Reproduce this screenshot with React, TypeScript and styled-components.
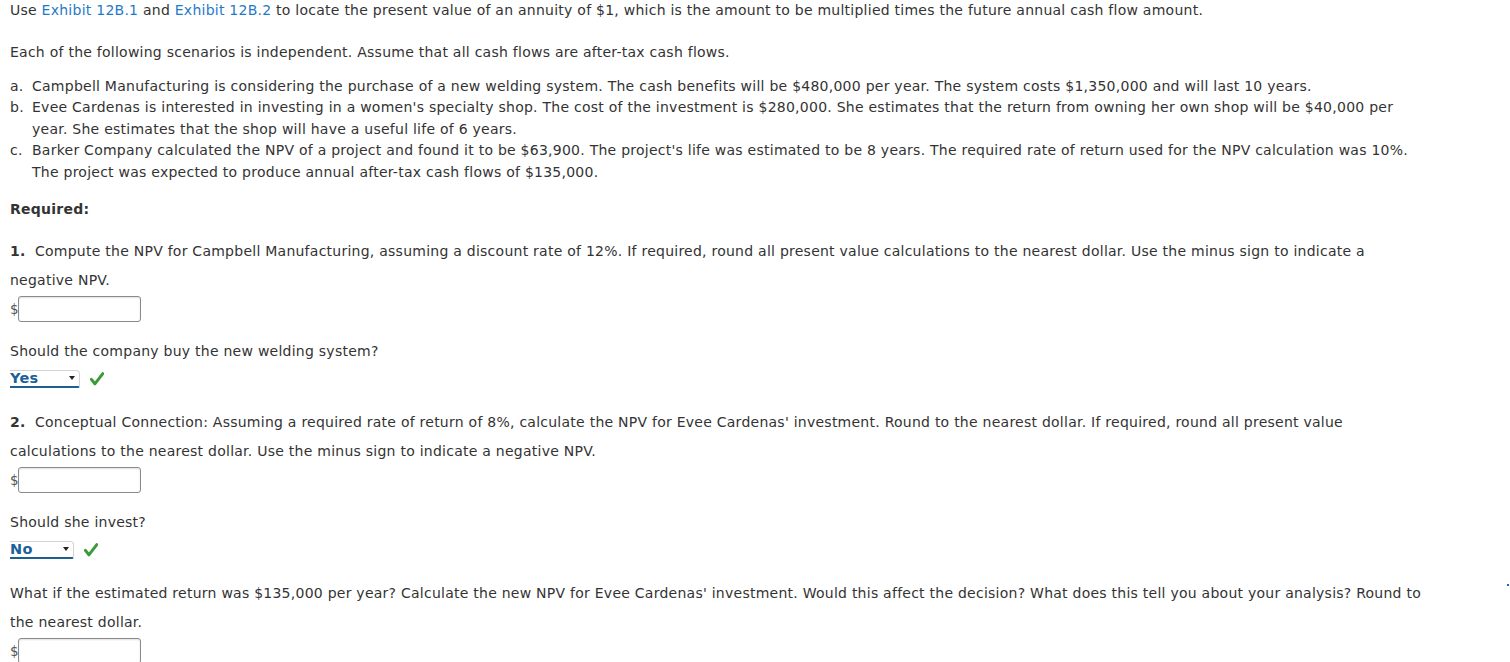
import React from "react";
import styled, { createGlobalStyle } from "styled-components";

const Global = createGlobalStyle`
  html, body { margin: 0; padding: 0; background: #fff; }
  body {
    font-family: "DejaVu Sans", Verdana, sans-serif;
    font-size: 14px;
    letter-spacing: 0.25px;
    color: #333;
  }
`;

const Page = styled.div`
  position: relative;
  padding: 0 10px;
  width: 1510px;
  height: 662px;
  box-sizing: border-box;
  overflow: hidden;
`;

const Content = styled.div`
  width: 1490px;
  white-space: nowrap;
`;

const P = styled.p<{ $mt?: number }>`
  margin: ${(p) => p.$mt ?? 0}px 0 0;
  line-height: 21.5px;
`;

const Link = styled.a`
  color: #1f7ac7;
  text-decoration: none;
`;

const List = styled.ol`
  margin: 12.5px 0 0;
  padding: 0;
  list-style: none;
`;

const Item = styled.li`
  display: grid;
  grid-template-columns: 22px 1fr;
  line-height: 21.5px;
`;

const Required = styled.div`
  margin-top: 16px;
  line-height: 21.5px;
  font-weight: bold;
`;

const Section = styled.section<{ $mt: number }>`
  margin-top: ${(p) => p.$mt}px;
`;

const Prompt = styled.p`
  margin: 0;
  line-height: 29px;
`;

const Num = styled.b`
  display: inline-block;
  width: 25px;
`;

const InputRow = styled.div`
  display: flex;
  align-items: center;
  margin-top: 1px;
  height: 26px;
`;

const Dollar = styled.span`
  width: 8px;
  color: #555;
  font-size: 13.5px;
  letter-spacing: 0;
  overflow: hidden;
`;

const Field = styled.input`
  box-sizing: border-box;
  width: 123px;
  height: 26px;
  border: 1px solid #8a8a8a;
  border-radius: 3px;
  margin: 0;
  padding: 2px 4px;
  font: inherit;
  box-shadow: inset 0 1px 2px rgba(0, 0, 0, 0.12);
`;

const Ask = styled.p`
  margin: 15px 0 0;
  line-height: 29px;
`;

const SelectRow = styled.div`
  display: flex;
  align-items: center;
  gap: 10px;
  height: 18px;
  margin-top: 4px;
`;

const SelectBox = styled.div<{ $w: number }>`
  position: relative;
  box-sizing: border-box;
  width: ${(p) => p.$w}px;
  height: 18px;
  border: 1px solid #d4d4d4;
  border-left: none;
  border-bottom: 2px solid #1e5f8f;
  border-radius: 0 4px 2px 0;
  background: #fff;
  color: #1d5f99;
  font-weight: bold;
  font-size: 14.5px;
  line-height: 15px;
`;

const Caret = styled.span`
  position: absolute;
  right: 4px;
  top: 5px;
  width: 0;
  height: 0;
  border-left: 3.5px solid transparent;
  border-right: 3.5px solid transparent;
  border-top: 4px solid #222;
`;

const Check = () => (
  <svg width="14" height="14" viewBox="0 0 14 14">
    <path d="M1.4 7.4 L4.9 11.8 L12.8 1.6" fill="none" stroke="#3b9b3b" strokeWidth="3" strokeLinecap="round" strokeLinejoin="round" />
  </svg>
);

const Dot = styled.span`
  position: absolute;
  left: 1507px;
  top: 584px;
  width: 2px;
  height: 2px;
  background: #2a5bd7;
`;

const Select = ({ value, w }: { value: string; w: number }) => (
  <SelectRow>
    <SelectBox $w={w}>
      {value}
      <Caret />
    </SelectBox>
    <Check />
  </SelectRow>
);

const Input = () => (
  <InputRow>
    <Dollar>$</Dollar>
    <Field type="text" />
  </InputRow>
);

export default function App() {
  return (
    <>
      <Global />
      <Page>
        <Content>
          <P>
            Use <Link>Exhibit 12B.1</Link> and <Link>Exhibit 12B.2</Link> to locate the present value of an annuity of $1, which is the amount to be multiplied times the future annual cash flow amount.
          </P>
          <P $mt={20}>Each of the following scenarios is independent. Assume that all cash flows are after-tax cash flows.</P>
          <List>
            <Item>
              <span>a.</span>
              <span>Campbell Manufacturing is considering the purchase of a new welding system. The cash benefits will be $480,000 per year. The system costs $1,350,000 and will last 10 years.</span>
            </Item>
            <Item>
              <span>b.</span>
              <span>
                Evee Cardenas is interested in investing in a women's specialty shop. The cost of the investment is $280,000. She estimates that the return from owning her own shop will be $40,000 per
                <br />
                year. She estimates that the shop will have a useful life of 6 years.
              </span>
            </Item>
            <Item>
              <span>c.</span>
              <span>
                Barker Company calculated the NPV of a project and found it to be $63,900. The project's life was estimated to be 8 years. The required rate of return used for the NPV calculation was 10%.
                <br />
                The project was expected to produce annual after-tax cash flows of $135,000.
              </span>
            </Item>
          </List>
          <Required>Required:</Required>
          <Section $mt={16}>
            <Prompt>
              <Num>1.</Num>Compute the NPV for Campbell Manufacturing, assuming a discount rate of 12%. If required, round all present value calculations to the nearest dollar. Use the minus sign to indicate a
              <br />
              negative NPV.
            </Prompt>
            <Input />
            <Ask>Should the company buy the new welding system?</Ask>
            <Select value="Yes" w={70} />
          </Section>
          <Section $mt={20}>
            <Prompt>
              <Num>2.</Num>Conceptual Connection: Assuming a required rate of return of 8%, calculate the NPV for Evee Cardenas' investment. Round to the nearest dollar. If required, round all present value
              <br />
              calculations to the nearest dollar. Use the minus sign to indicate a negative NPV.
            </Prompt>
            <Input />
            <Ask>Should she invest?</Ask>
            <Select value="No" w={64} />
          </Section>
          <Section $mt={20}>
            <Prompt>
              What if the estimated return was $135,000 per year? Calculate the new NPV for Evee Cardenas' investment. Would this affect the decision? What does this tell you about your analysis? Round to
              <br />
              the nearest dollar.
            </Prompt>
            <Input />
          </Section>
        </Content>
        <Dot />
      </Page>
    </>
  );
}
